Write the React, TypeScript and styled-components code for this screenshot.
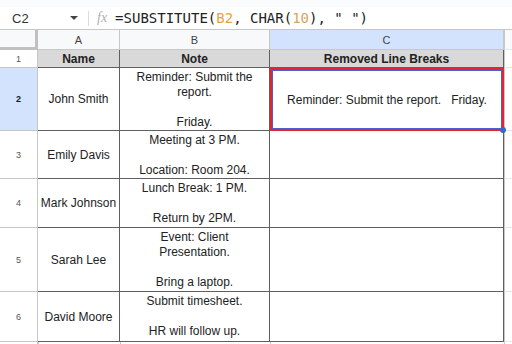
import React from "react";
import styled, { createGlobalStyle, css } from "styled-components";

const GlobalStyle = createGlobalStyle`
  body {
    margin: 0;
    background: #ffffff;
    font-family: "Liberation Sans", Arial, sans-serif;
  }
`;

const Page = styled.div`
  width: 512px;
  height: 344px;
  overflow: hidden;
  background: #ffffff;
`;

const TopStrip = styled.div`
  height: 7px;
  background: #f9fbfd;
`;

const FormulaBar = styled.div`
  height: 22px;
  display: flex;
  align-items: center;
  border-bottom: 1px solid #c7c7c7;
  background: #ffffff;
`;

const NameBox = styled.div`
  width: 88px;
  display: flex;
  align-items: center;
  justify-content: space-between;
  padding: 0 10px 0 12px;
  box-sizing: border-box;
  font-size: 13px;
  color: #333;
`;

const Caret = styled.span`
  width: 0;
  height: 0;
  border-left: 4px solid transparent;
  border-right: 4px solid transparent;
  border-top: 4px solid #444;
`;

const Divider = styled.span`
  width: 1px;
  height: 15px;
  background: #dadce0;
`;

const Fx = styled.span`
  margin: 0 8px 0 8px;
  font-family: "Liberation Serif", serif;
  font-style: italic;
  font-size: 14px;
  color: #b0b0b0;
`;

const Formula = styled.span`
  font-family: "DejaVu Sans Mono", monospace;
  font-size: 14px;
  color: #222;
  white-space: pre;
`;

const Ref = styled.span<{ $tone: string }>`
  color: ${(p) => p.$tone};
`;

const Sheet = styled.div`
  display: grid;
  grid-template-columns: 38px 82px 150px 234px 1fr;
  grid-template-rows: 20px 18px 63px 48px 49px 64px 50px 20px;
`;

const Corner = styled.div`
  background: #f8f9fa;
  border-right: 3px solid #c0c0c0;
  border-bottom: 3px solid #c0c0c0;
  box-sizing: border-box;
`;

const ColHead = styled.div<{ $active?: boolean }>`
  display: flex;
  align-items: center;
  justify-content: center;
  font-size: 11px;
  color: #444;
  background: ${(p) => (p.$active ? "#d3e3fd" : "#f8f9fa")};
  border-right: 1px solid #c7c7c7;
  border-bottom: 1px solid #c7c7c7;
  box-sizing: border-box;
`;

const RowHead = styled.div<{ $active?: boolean }>`
  display: flex;
  align-items: center;
  justify-content: center;
  font-size: 9px;
  color: ${(p) => (p.$active ? "#0b1a33" : "#555")};
  font-weight: ${(p) => (p.$active ? 700 : 400)};
  background: ${(p) => (p.$active ? "#d3e3fd" : "#ffffff")};
  border-right: 1px solid #c7c7c7;
  border-bottom: 1px solid #c7c7c7;
  box-sizing: border-box;
`;

const cellBase = css`
  box-sizing: border-box;
  border-right: 1px solid #5f5f5f;
  border-bottom: 1px solid #5f5f5f;
  font-size: 12px;
  color: #222;
`;

const HeaderCell = styled.div`
  ${cellBase};
  display: flex;
  align-items: center;
  justify-content: center;
  background: #d9d9d9;
  font-weight: 700;
`;

const NameCell = styled.div`
  ${cellBase};
  display: flex;
  align-items: center;
  justify-content: center;
`;

const NoteCell = styled.div`
  ${cellBase};
  padding: 2px 7px 0;
  text-align: center;
  line-height: 15px;
  white-space: pre-wrap;
  overflow: hidden;
`;

const ResultCell = styled.div<{ $selected?: boolean }>`
  ${cellBase};
  position: relative;
  display: flex;
  align-items: center;
  justify-content: center;
  white-space: pre;
  ${(p) =>
    p.$selected &&
    css`
      border: 2px solid #e8232e;
      box-shadow: inset 0 0 0 1px #4a5fd0;
    `}
`;

const Handle = styled.span`
  position: absolute;
  right: -4px;
  bottom: -4px;
  width: 6px;
  height: 6px;
  border-radius: 50%;
  background: #3367d6;
`;

const Blank = styled.div<{ $head?: boolean }>`
  box-sizing: border-box;
  border-bottom: 1px solid #e6e6e6;
  border-left: 1px solid #c7c7c7;
  background: ${(p) => (p.$head ? "#f8f9fa" : "#ffffff")};
`;

const rows = [
  { n: 3, name: "Emily Davis", note: "Meeting at 3 PM.\n\nLocation: Room 204." },
  { n: 4, name: "Mark Johnson", note: "Lunch Break: 1 PM.\n\nReturn by 2PM." },
  { n: 5, name: "Sarah Lee", note: "Event: Client Presentation.\n\nBring a laptop." },
  { n: 6, name: "David Moore", note: "Submit timesheet.\n\nHR will follow up." },
];

export default function App() {
  return (
    <Page>
      <GlobalStyle />
      <TopStrip />
      <FormulaBar>
        <NameBox>
          C2
          <Caret />
        </NameBox>
        <Divider />
        <Fx>fx</Fx>
        <Formula>
          =SUBSTITUTE(<Ref $tone="#e8a33c">B2</Ref>, CHAR(<Ref $tone="#d9a35a">10</Ref>), " ")
        </Formula>
      </FormulaBar>
      <Sheet>
        <Corner />
        <ColHead>A</ColHead>
        <ColHead>B</ColHead>
        <ColHead $active>C</ColHead>
        <Blank $head />

        <RowHead>1</RowHead>
        <HeaderCell>Name</HeaderCell>
        <HeaderCell>Note</HeaderCell>
        <HeaderCell>Removed Line Breaks</HeaderCell>
        <Blank />

        <RowHead $active>2</RowHead>
        <NameCell>John Smith</NameCell>
        <NoteCell>{"Reminder: Submit the report.\n\nFriday."}</NoteCell>
        <ResultCell $selected>
          {"Reminder: Submit the report.   Friday."}
          <Handle />
        </ResultCell>
        <Blank />

        {rows.map((r) => (
          <React.Fragment key={r.n}>
            <RowHead>{r.n}</RowHead>
            <NameCell>{r.name}</NameCell>
            <NoteCell>{r.note}</NoteCell>
            <ResultCell />
            <Blank />
          </React.Fragment>
        ))}

        <RowHead />
        <Blank />
        <Blank />
        <Blank />
        <Blank />
      </Sheet>
    </Page>
  );
}
